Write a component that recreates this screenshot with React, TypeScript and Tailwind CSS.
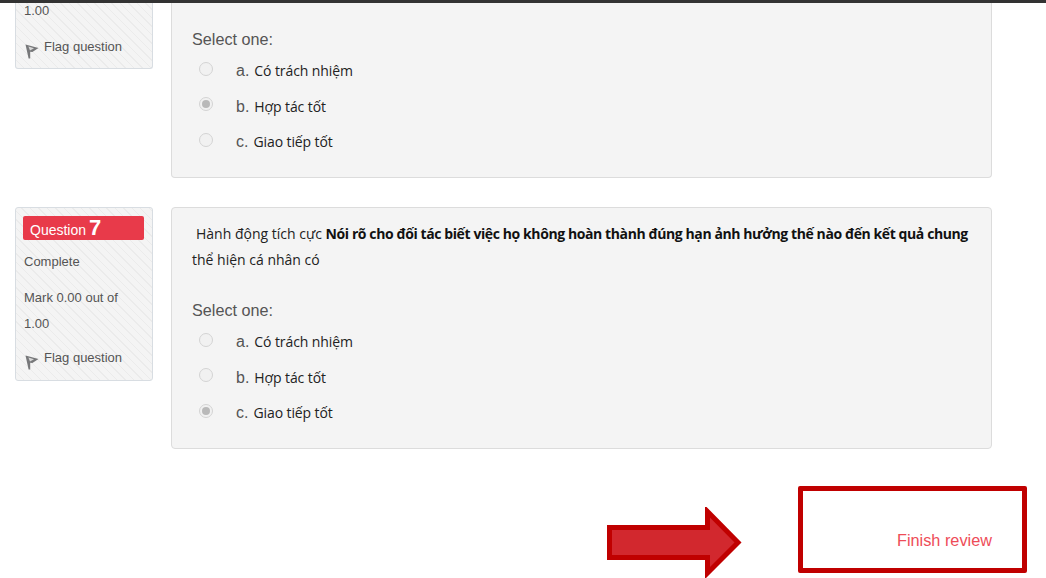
import React from 'react';

const stripes =
  'bg-[repeating-linear-gradient(45deg,#f4f4f4_0px,#f4f4f4_5px,#ebebeb_5px,#ebebeb_6px)]';
const arial = "font-['Liberation_Sans',sans-serif]";
const segoe = "font-['Open_Sans',sans-serif]";

function FlagIcon() {
  return (
    <svg width="14" height="15" viewBox="0 0 14 15" className="shrink-0">
      <path d="M0.5 0.5 L13.5 4 L7.4 8 L5.2 7.8 L5.2 14.5 L3.6 14.5 Z" fill="#77787a" />
      <path d="M3.4 2.6 L9 4.2 L5 6.6 Z" fill="#d8d8d8" />
    </svg>
  );
}

function Answer({ letter, text, checked }: { letter: string; text: string; checked?: boolean }) {
  return (
    <div className="flex h-[35.67px] items-center pl-[7px]">
      <span className="relative -top-[2.5px] flex h-[14px] w-[14px] items-center justify-center rounded-full border border-[#d4d4d4] bg-[#f1f1f1]">
        {checked && <span className="h-[8px] w-[8px] rounded-full bg-[#b9b9b9]" />}
      </span>
      <span className="ml-[23px] flex items-baseline">
        <span className={`${arial} text-[16px] text-[#555]`}>{letter}.</span>
        <span className={`${segoe} ml-[5px] text-[14px] tracking-[-0.1px] text-[#222]`}>{text}</span>
      </span>
    </div>
  );
}

function Answers({ picked }: { picked: string }) {
  return (
    <div>
      <Answer letter="a" text="Có trách nhiệm" checked={picked === 'a'} />
      <Answer letter="b" text="Hợp tác tốt" checked={picked === 'b'} />
      <Answer letter="c" text="Giao tiếp tốt" checked={picked === 'c'} />
    </div>
  );
}

function FlagLine() {
  return (
    <div className="flex items-start gap-[5px] pl-[9px]">
      <span className="mt-[8px]">
        <FlagIcon />
      </span>
      <span className="text-[13px] leading-[22px]">Flag question</span>
    </div>
  );
}

export default function App() {
  return (
    <div className={`${arial} flex h-[578px] w-[1046px] flex-col overflow-hidden bg-white`}>
      <div className="h-[3px] shrink-0 bg-[#333]" />

      {/* question 6, scrolled off the top */}
      <div className="flex items-start gap-[18px] pl-[15px]">
        <div className={`${stripes} h-[66px] w-[138px] rounded-b-[3px] border border-t-0 border-[#d8dde2] text-[#555]`}>
          <div className="pl-[8px] text-[13px] leading-[16px]">1.00</div>
          <div className="mt-[17px]">
            <FlagLine />
          </div>
        </div>
        <div className="h-[175px] w-[821px] rounded-b-[4px] border border-t-0 border-[#dcdcdc] bg-[#f4f4f4] pl-[20px]">
          <div className="mt-[26px] text-[16.2px] leading-[20px] text-[#555]">Select one:</div>
          <div className="mt-[4.2px]">
            <Answers picked="b" />
          </div>
        </div>
      </div>

      {/* question 7 */}
      <div className="mt-[29px] flex items-start gap-[18px] pl-[15px]">
        <div className={`${stripes} h-[174px] w-[138px] rounded-[3px] border border-[#d8dde2] pt-[8px] text-[#555]`}>
          <div className="mx-[7px] flex h-[24px] w-[121px] items-baseline rounded-[2px] bg-[#e83a4a] pt-[1px] pl-[7px] text-[14px] text-white">
            Question <span className="ml-[3px] text-[22px] leading-[21px] font-bold">7</span>
          </div>
          <div className="mt-[9px] pl-[8px] text-[13px] leading-[26px]">Complete</div>
          <div className="mt-[10px] pl-[8px] text-[13px] leading-[26px]">
            Mark 0.00 out of
            <br />
            1.00
          </div>
          <div className="mt-[10px]">
            <FlagLine />
          </div>
        </div>
        <div className="h-[242px] w-[821px] rounded-[4px] border border-[#dcdcdc] bg-[#f4f4f4] pl-[20px]">
          <div className={`${segoe} mt-[13px] w-[790px] text-[14px] leading-[26px] text-[#222]`}>
            <span className="pl-[4px]">Hành động tích cực </span>
            <b className="tracking-[-0.4px] text-[#111]">Nói rõ cho đối tác biết việc họ không hoàn thành đúng hạn ảnh hưởng thế nào đến kết quả chung</b>
            <br />
            <span>thể hiện cá nhân có</span>
          </div>
          <div className="mt-[27px] text-[16.2px] leading-[20px] text-[#555]">Select one:</div>
          <div className="mt-[4.2px]">
            <Answers picked="c" />
          </div>
        </div>
      </div>

      {/* finish review callout */}
      <div className="mt-[37px] flex items-start justify-end gap-[56px] pr-[19px]">
        <svg width="135" height="71" viewBox="0 0 135 71" className="mt-[21px]">
          <path
            d="M2.5 20.5 H100.5 V4.5 L131 35.5 L100.5 66 V50.5 H2.5 Z"
            fill="#d2282e"
            stroke="#c00000"
            strokeWidth="5"
          />
        </svg>
        <div className="flex h-[87px] w-[229px] items-end justify-end rounded-[2px] border-[5px] border-[#c00000] pr-[30px] pb-[18px]">
          <span className="text-[16.3px] leading-[20px] text-[#ee4c58]">Finish review</span>
        </div>
      </div>
    </div>
  );
}
